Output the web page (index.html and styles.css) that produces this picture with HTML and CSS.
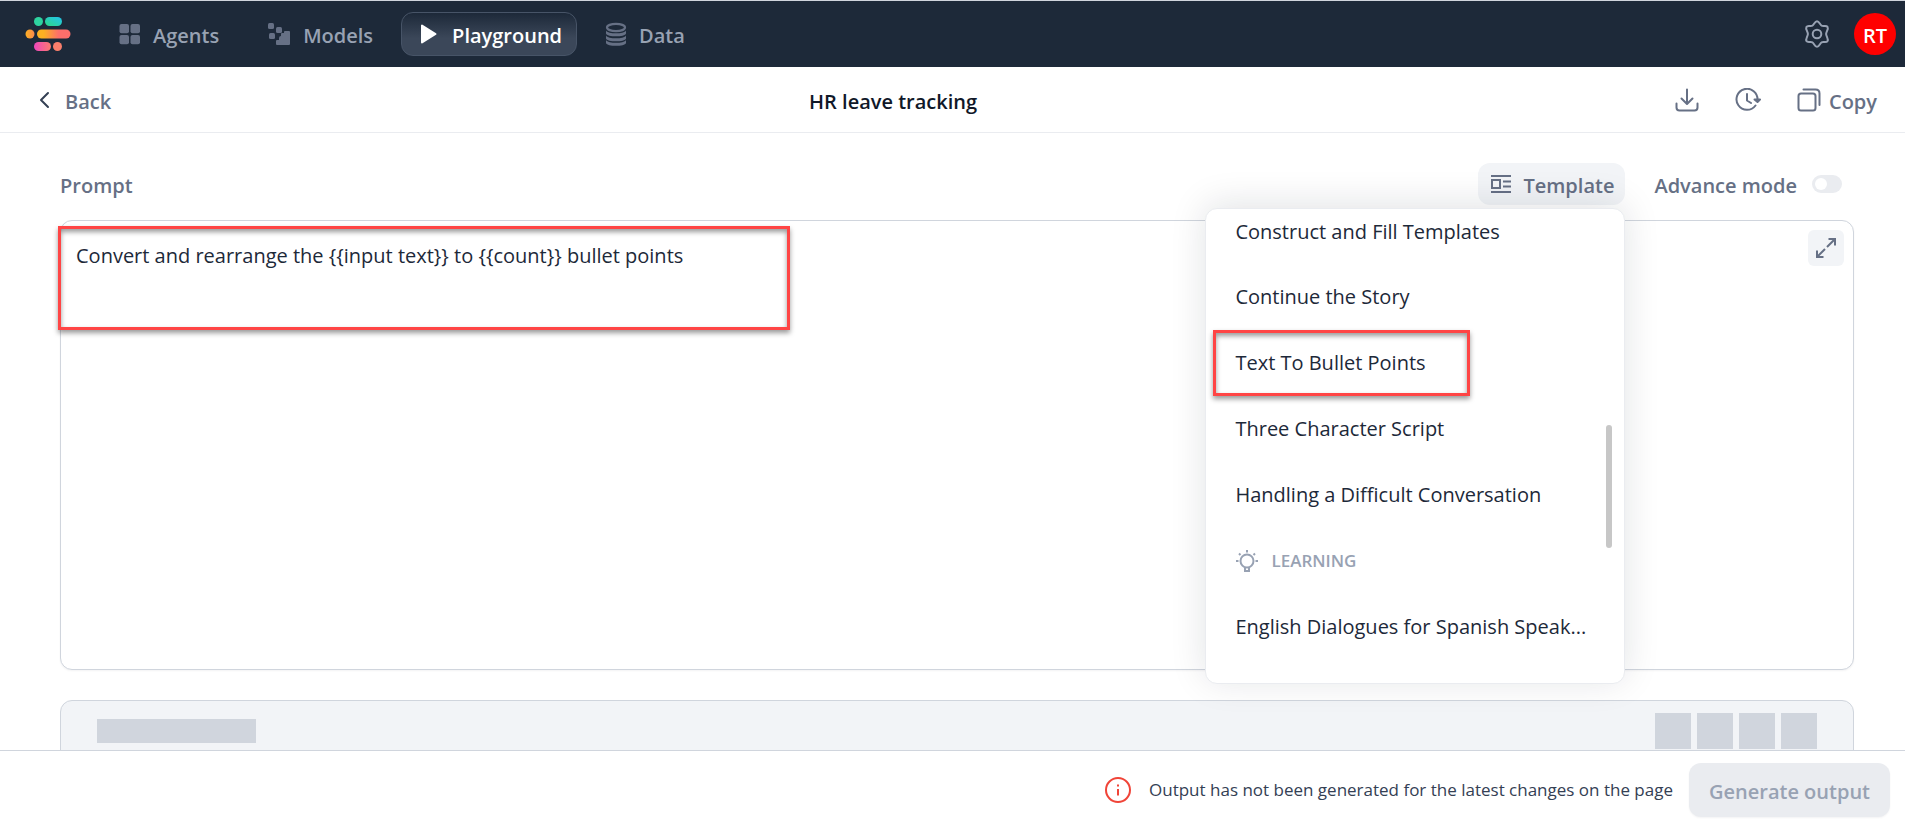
FILE: index.html
```html
<!DOCTYPE html>
<html lang="en">
<head>
<meta charset="utf-8">
<meta name="viewport" content="width=device-width, initial-scale=1">
<title>HR leave tracking</title>
<link rel="stylesheet" href="styles.css">
</head>
<body>
<div class="app">
  <header class="topbar">
    <a class="brand" href="#" aria-label="Home">
      <svg width="46" height="34" viewBox="0 0 46 34" aria-hidden="true">
        <defs>
          <linearGradient id="g1" x1="0" x2="1" y1="1" y2="0"><stop offset="0" stop-color="#2fd885"/><stop offset="1" stop-color="#22c3ee"/></linearGradient>
          <linearGradient id="g2" x1="0" x2="1"><stop offset="0.2" stop-color="#fdb022"/><stop offset="0.65" stop-color="#fd6f6b"/></linearGradient>
          <linearGradient id="g3" x1="0" x2="1"><stop offset="0" stop-color="#ee46bc"/><stop offset="1" stop-color="#fb7a6e"/></linearGradient>
          <linearGradient id="g4" x1="0" x2="1"><stop offset="0" stop-color="#fdb022"/><stop offset="1" stop-color="#fb8a4e"/></linearGradient>
        </defs>
        <circle cx="13.500" cy="4.500" r="4.500" fill="#2ed3a0"/>
        <rect x="20" y="0" width="17" height="9" rx="4.500" fill="url(#g1)"/>
        <circle cx="5" cy="17" r="4.500" fill="url(#g4)"/>
        <rect x="12" y="12.500" width="33.500" height="9" rx="4.500" fill="url(#g2)"/>
        <rect x="9" y="25" width="17" height="9" rx="4.500" fill="url(#g3)"/>
        <circle cx="32.500" cy="29.500" r="4.500" fill="#fa7f6c"/>
      </svg>
    </a>
    <nav class="nav">
      <a class="nav-item" href="#">
        <svg width="22" height="22" viewBox="0 0 22 22" fill="#667085" aria-hidden="true"><rect x="0.500" y="1" width="9.500" height="9.300" rx="2"/><rect x="11.500" y="1" width="9.500" height="9.300" rx="2"/><rect x="0.500" y="12" width="9.500" height="9.300" rx="2"/><rect x="11.500" y="12" width="9.500" height="9.300" rx="2"/></svg>
        <span class="caption">Agents</span>
      </a>
      <a class="nav-item" href="#">
        <svg width="24" height="24" viewBox="0 0 24 24" fill="#667085" aria-hidden="true"><rect x="1" y="1" width="6" height="6" rx="1.500"/><rect x="9" y="5" width="6" height="6" rx="1.500"/><rect x="2" y="11" width="6" height="6" rx="1.500"/><path d="M9 19q0-1 1-1h2v-2q0-2 2-2h0v-2q0-1 1-1h2v-1q0-1 1-1h4q1 0 1 1v12q0 1-1 1H10q-1 0-1-1z"/></svg>
        <span class="caption">Models</span>
      </a>
      <a class="nav-item nav-item-active" href="#" aria-current="page">
        <svg width="18" height="22" viewBox="0 0 18 22" aria-hidden="true"><path d="M2 2.500v17L15.500 11z" fill="#fff" stroke="#fff" stroke-width="2" stroke-linejoin="round"/></svg>
        <span class="caption">Playground</span>
      </a>
      <a class="nav-item" href="#">
        <svg width="22" height="24" viewBox="0 0 22 24" aria-hidden="true"><ellipse cx="11" cy="5.500" rx="9" ry="3.700" fill="none" stroke="#667085" stroke-width="2.200"/><path id="disc" d="M1 8.500C3 12.300 19 12.300 21 8.500V11.500C20 15.300 2 15.300 1 11.500z" fill="#667085"/><use href="#disc" y="5"/><use href="#disc" y="9.500"/></svg>
        <span class="caption">Data</span>
      </a>
    </nav>
    <div class="account">
      <button class="icon-button" type="button" aria-label="Settings">
        <svg width="30" height="30" viewBox="0 0 30 30" fill="none" stroke="#98a2b3" stroke-width="2" stroke-linejoin="round" aria-hidden="true"><circle cx="15" cy="15" r="4.300"/><path d="M15 2.200c2.300 0 2.800 3.500 4.600 4.500s4.800-.8 6 1.200-1.500 5-1.500 7.100 2.700 5 1.500 7.100-4.200.2-6 1.200-2.300 4.500-4.600 4.500-2.800-3.500-4.600-4.500-4.800.8-6-1.200 1.500-5 1.500-7.100-2.700-5-1.500-7.100 4.200-.2 6-1.200 2.300-4.500 4.600-4.500z"/></svg>
      </button>
      <button class="avatar" type="button"><span class="caption">RT</span></button>
    </div>
  </header>

  <div class="titlebar">
    <a class="back" href="#">
      <svg width="16" height="20" viewBox="0 0 16 20" fill="none" stroke="#344054" stroke-width="2" stroke-linecap="round" stroke-linejoin="round" aria-hidden="true"><path d="M12 3 5 10l7 7"/></svg>
      <span class="caption">Back</span>
    </a>
    <h1 class="title caption">HR leave tracking</h1>
    <div class="actions">
      <button class="icon-button" type="button" aria-label="Download">
        <svg width="24" height="24" viewBox="0 0 24 24" fill="none" stroke="#667085" stroke-width="2" stroke-linecap="round" stroke-linejoin="round" aria-hidden="true"><path d="M12 1.500v14M6.500 10.500 12 16l5.500-5.500M1.500 15.500v4q0 3 3 3h15q3 0 3-3v-4"/></svg>
      </button>
      <button class="icon-button" type="button" aria-label="History">
        <svg width="26" height="24" viewBox="0 0 26 24" fill="none" stroke="#667085" stroke-width="2" stroke-linecap="round" stroke-linejoin="round" aria-hidden="true"><path d="M20.500 17.500A10.500 10.500 0 1 1 22.500 12M12 6v6.500l4 2.500"/><path d="m19.500 11.500 3 2.500 2.500-2.500z" fill="#667085"/></svg>
      </button>
      <button class="copy" type="button">
        <svg width="24" height="24" viewBox="0 0 24 24" fill="none" stroke="#667085" stroke-width="2" stroke-linecap="round" aria-hidden="true"><rect x="1.500" y="5.500" width="17" height="17" rx="2.500"/><path d="M6.500 1.500H18.500q4 0 4 4V17"/></svg>
        <span class="caption">Copy</span>
      </button>
    </div>
  </div>

  <main class="workspace">
    <div class="prompt-head">
      <label class="prompt-label caption" for="prompt">Prompt</label>
      <div class="prompt-tools">
        <div class="template">
          <button class="template-button" type="button" aria-expanded="true">
            <svg width="20" height="20" viewBox="0 0 20 20" fill="none" stroke="#667085" stroke-width="2" aria-hidden="true"><path d="M0 2h20M0 18h20M12 7.500h8M12 12.500h8"/><rect x="1" y="6" width="8" height="8"/></svg>
            <span class="caption">Template</span>
          </button>
          <div class="menu">
            <ul class="menu-list">
              <li><button class="menu-item" type="button">Construct and Fill Templates</button></li>
              <li><button class="menu-item" type="button">Continue the Story</button></li>
              <li class="marked"><button class="menu-item" type="button">Text To Bullet Points</button></li>
              <li><button class="menu-item" type="button">Three Character Script</button></li>
              <li><button class="menu-item" type="button">Handling a Difficult Conversation</button></li>
              <li class="menu-group">
                <svg width="24" height="24" viewBox="0 0 24 24" fill="none" stroke="#98a2b3" stroke-width="2" aria-hidden="true"><circle cx="12" cy="12" r="6.500"/><path d="M12 1v2.500M1 12h2.500M20.500 12H23M4 4.500l1.500 1.500M20 4.500 18.500 6M10 18v4h4v-4"/></svg>
                LEARNING
              </li>
              <li><button class="menu-item" type="button">English Dialogues for Spanish Speak...</button></li>
            </ul>
            <span class="menu-scroll"></span>
          </div>
        </div>
        <label class="advance"><span class="caption">Advance mode</span> <input class="switch" type="checkbox" role="switch"></label>
      </div>
    </div>

    <div class="editor">
      <textarea class="prompt" id="prompt" spellcheck="false">Convert and rearrange the {{input text}} to {{count}} bullet points</textarea>
      <span class="highlight"></span>
      <button class="expand" type="button" aria-label="Expand">
        <svg width="22" height="22" viewBox="0 0 22 22" fill="none" stroke="#667085" stroke-width="2" aria-hidden="true"><path d="M13.500 2H20v6.500M20 2l-8 8M8.500 20H2v-6.500M2 20l8-8"/></svg>
      </button>
    </div>

    <section class="skeleton" aria-busy="true">
      <span class="skeleton-bar"></span>
      <div class="skeleton-tiles"><span class="tile"></span><span class="tile"></span><span class="tile"></span><span class="tile"></span></div>
    </section>
  </main>

  <footer class="footer">
    <p class="notice">
      <svg width="26" height="26" viewBox="0 0 26 26" fill="none" stroke="#f04438" stroke-width="2" aria-hidden="true"><circle cx="13" cy="13" r="12"/><path d="M13 12v6.500M13 7.500v2"/></svg>
      Output has not been generated for the latest changes on the page
    </p>
    <button class="generate" type="button" disabled><span class="caption">Generate output</span></button>
  </footer>
</div>
</body>
</html>
```
FILE: styles.css
```css
*, *::before, *::after { box-sizing: border-box; }

body {
  margin: 0;
  color: #101828;
  background: #fff;
  font: 400 20px/28px "Open Sans", "Noto Sans", sans-serif;
}

button {
  margin: 0;
  padding: 0;
  border: 0;
  color: inherit;
  background: none;
  font: inherit;
  cursor: pointer;
}

a { color: inherit; text-decoration: none; }
svg { display: block; flex: none; }

.caption { display: block; padding-top: 4px; }

.app { display: flex; flex-direction: column; height: 100vh; }

.topbar {
  display: flex;
  align-items: center;
  padding: 11px 9px 11px 25px;
  color: #98a2b3;
  background: #1d2939;
  border-top: 1px solid #d0d5dd;
  font-weight: 600;
}

.nav { display: flex; gap: 8px; margin-left: 28px; }

.nav-item {
  display: flex;
  align-items: center;
  gap: 12px;
  height: 44px;
  padding: 0 19px;
  border: 1px solid transparent;
  border-radius: 12px;
}

.nav-item-active {
  gap: 14px;
  padding: 0 14px 0 18px;
  color: #fff;
  background: linear-gradient(#1d2939, #3b4759 60%);
  border-color: #475467;
}

.account { display: flex; align-items: center; gap: 22px; margin-left: auto; }

.avatar {
  width: 42px;
  height: 42px;
  color: #fff;
  background: #f00;
  border-radius: 50%;
}

.titlebar {
  display: flex;
  align-items: center;
  justify-content: space-between;
  height: 66px;
  padding: 0 28px 0 36px;
  border-bottom: 1px solid #eaecf0;
  color: #667085;
  font-weight: 600;
  flex: none;
}

.back { display: flex; align-items: center; gap: 13px; }
.title { margin: 0; color: #101828; font: inherit; }
.actions { display: flex; align-items: center; gap: 36px; }
.copy { display: flex; align-items: center; gap: 8px; }

.workspace { flex: 1; min-height: 0; padding: 30px 51px 0 60px; overflow: hidden; }

.prompt-head, .prompt-tools {
  display: flex;
  align-items: center;
  justify-content: space-between;
  color: #667085;
  font-weight: 600;
}

.prompt-tools { gap: 29px; padding-right: 12px; }
.template { position: relative; }

.template-button {
  display: flex;
  align-items: center;
  gap: 12px;
  height: 42px;
  padding: 0 11px 0 13px;
  background: #f2f4f7;
  border-radius: 12px;
}

.menu {
  position: absolute;
  z-index: 2;
  top: 45px;
  right: 0;
  width: 420px;
  height: 476px;
  color: #1d2939;
  background: #fff;
  border: 1px solid #eaecf0;
  border-radius: 12px;
  box-shadow: 0 -4px 36px rgba(16, 24, 40, .12);
  font-weight: 400;
}

.menu-list { margin: 0; padding: 0 29px; list-style: none; }
.menu-list li { position: relative; display: flex; align-items: center; height: 66px; }
.menu-list li:first-child { height: 55px; padding-bottom: 9px; }
.menu-item { text-align: left; white-space: nowrap; }
.menu-list .menu-group { gap: 12px; color: #98a2b3; font-size: 17px; font-weight: 600; }

.marked::before, .highlight {
  content: "";
  position: absolute;
  border: 3px solid #ff4545;
  box-shadow: 0 3px 5px rgba(0, 0, 0, .4), inset 0 3px 5px rgba(0, 0, 0, .4);
  pointer-events: none;
}

.marked::before { inset: 0 125px 0 -22px; }

.menu-scroll {
  position: absolute;
  top: 216px;
  right: 12px;
  width: 6px;
  height: 123px;
  background: #c7c7c7;
  border-radius: 3px;
}

.advance { display: flex; align-items: center; gap: 15px; }

.switch {
  appearance: none;
  width: 30px;
  height: 18px;
  margin: 0;
  padding: 3px;
  background: #eaecf0;
  border-radius: 9px;
}

.switch::before {
  content: "";
  display: block;
  width: 12px;
  height: 12px;
  background: #fff;
  border-radius: 50%;
}

.editor { position: relative; margin-top: 15px; }

.prompt {
  display: block;
  width: 100%;
  height: 450px;
  padding: 21px 64px 21px 15px;
  color: #1d2939;
  background: #fff;
  border: 1px solid #d0d5dd;
  border-radius: 12px;
  box-shadow: 0 1px 2px rgba(16, 24, 40, .05);
  font: inherit;
  resize: none;
  outline: 0;
}

.highlight { top: 6px; left: -2px; width: 732px; height: 104px; }

.expand {
  position: absolute;
  top: 10px;
  right: 10px;
  display: grid;
  place-items: center;
  width: 36px;
  height: 36px;
  background: #f2f4f7;
  border-radius: 6px;
}

.skeleton {
  display: flex;
  justify-content: space-between;
  align-items: flex-start;
  height: 120px;
  margin-top: 30px;
  padding: 12px 36px;
  background: #f2f4f7;
  border: 1px solid #d0d5dd;
  border-radius: 12px;
}

.skeleton-bar { width: 159px; height: 24px; margin-top: 6px; background: #d0d5dd; }
.skeleton-tiles { display: flex; gap: 6px; }
.tile { width: 36px; height: 36px; background: #d0d5dd; }

.footer {
  display: flex;
  align-items: center;
  justify-content: flex-end;
  gap: 16px;
  height: 76px;
  flex: none;
  padding: 3px 15px 0;
  border-top: 1px solid #d0d5dd;
  background: #fff;
}

.notice {
  display: flex;
  align-items: center;
  gap: 18px;
  margin: 0;
  color: #344054;
  font-size: 17px;
}

.generate {
  height: 54px;
  padding: 0 20px;
  color: #98a2b3;
  background: #eaecf0;
  border-radius: 12px;
  box-shadow: 0 1px 2px rgba(16, 24, 40, .05);
  font-weight: 600;
}
```
